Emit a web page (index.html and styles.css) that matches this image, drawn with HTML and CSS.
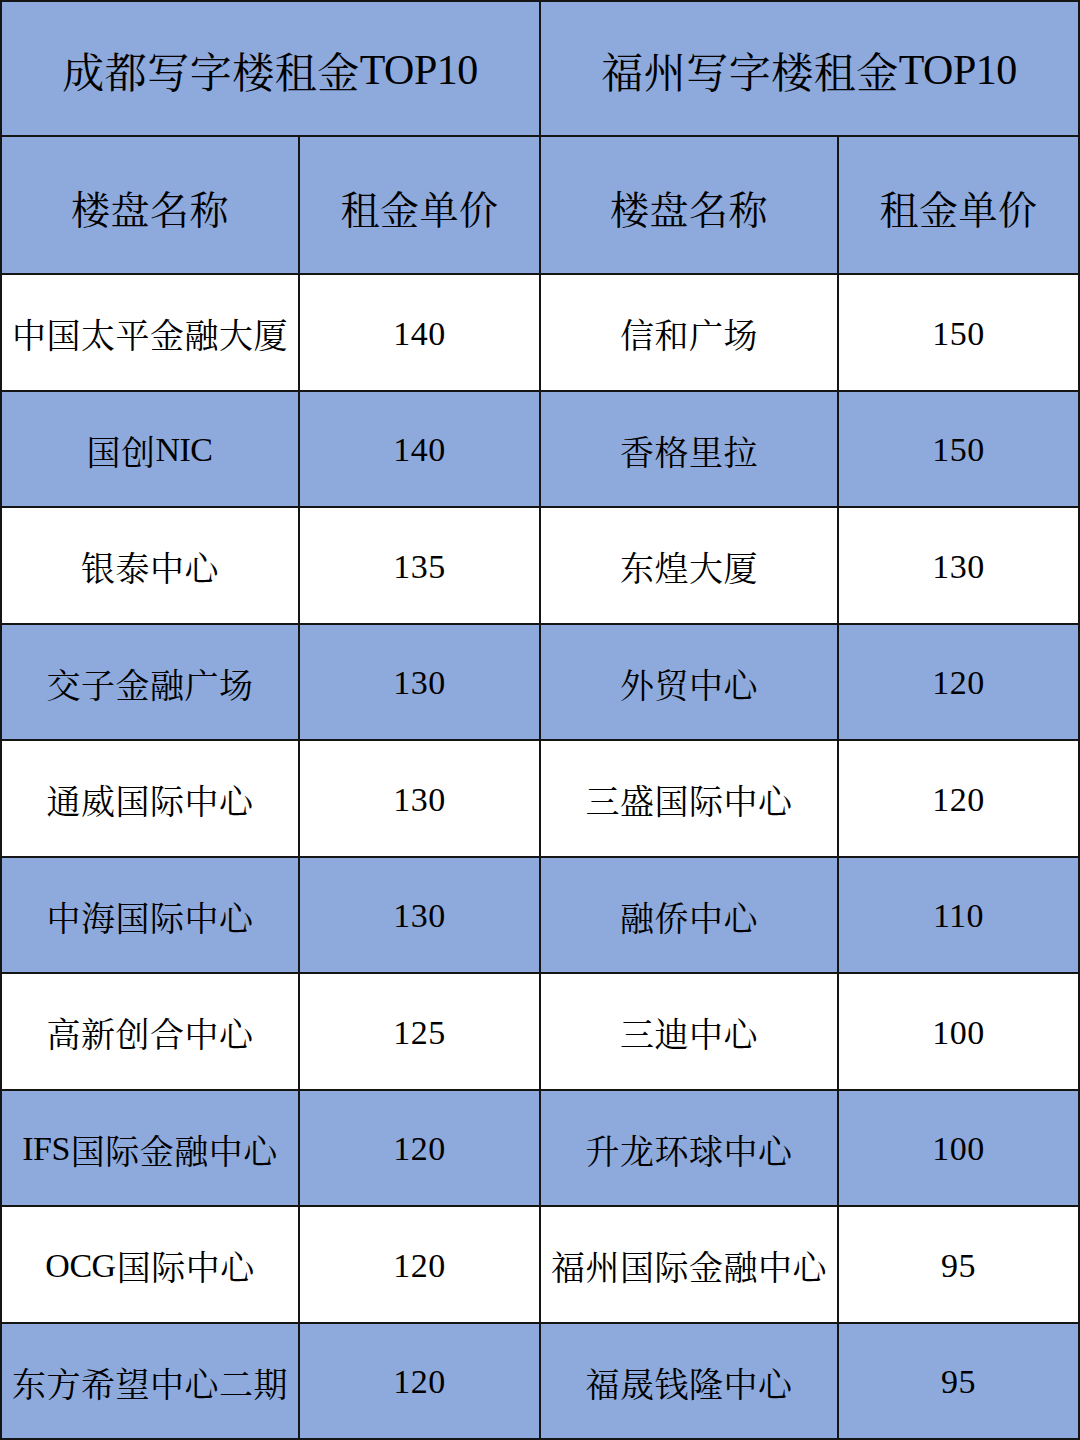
FILE: index.html
```html
<!DOCTYPE html>
<html lang="zh-CN">
<head>
<meta charset="utf-8">
<title>写字楼租金TOP10</title>
<link rel="stylesheet" href="styles.css">
</head>
<body>
<div class="table">
  <div class="cell title span2">成都写字楼租金<span class="lat">TOP10</span></div>
  <div class="cell title span2">福州写字楼租金<span class="lat">TOP10</span></div>
  <div class="cell sub">楼盘名称</div>
  <div class="cell sub">租金单价</div>
  <div class="cell sub">楼盘名称</div>
  <div class="cell sub">租金单价</div>

  <div class="cell w">中国太平金融大厦</div><div class="cell w">140</div><div class="cell w">信和广场</div><div class="cell w">150</div>
  <div class="cell b">国创<span class="lat">NIC</span></div><div class="cell b">140</div><div class="cell b">香格里拉</div><div class="cell b">150</div>
  <div class="cell w">银泰中心</div><div class="cell w">135</div><div class="cell w">东煌大厦</div><div class="cell w">130</div>
  <div class="cell b">交子金融广场</div><div class="cell b">130</div><div class="cell b">外贸中心</div><div class="cell b">120</div>
  <div class="cell w">通威国际中心</div><div class="cell w">130</div><div class="cell w">三盛国际中心</div><div class="cell w">120</div>
  <div class="cell b">中海国际中心</div><div class="cell b">130</div><div class="cell b">融侨中心</div><div class="cell b">110</div>
  <div class="cell w">高新创合中心</div><div class="cell w">125</div><div class="cell w">三迪中心</div><div class="cell w">100</div>
  <div class="cell b"><span class="lat">IFS</span>国际金融中心</div><div class="cell b">120</div><div class="cell b">升龙环球中心</div><div class="cell b">100</div>
  <div class="cell w"><span class="lat">OCG</span>国际中心</div><div class="cell w">120</div><div class="cell w">福州国际金融中心</div><div class="cell w">95</div>
  <div class="cell b">东方希望中心二期</div><div class="cell b">120</div><div class="cell b">福晟钱隆中心</div><div class="cell b">95</div>
</div>
</body>
</html>
```

FILE: styles.css
```css
html, body {
  margin: 0;
  padding: 0;
  background: #ffffff;
}

.table {
  width: 1080px;
  height: 1440px;
  box-sizing: border-box;
  display: grid;
  grid-template-columns: 296px 239px 296px 239px;
  grid-template-rows: 133px 136px repeat(10, 114.5px);
  gap: 2px;
  padding: 2px;
  background: #151515;
  font-family: "Liberation Serif", "Noto Serif CJK SC", "Noto Sans CJK SC", serif;
  color: #000000;
}

.cell {
  display: flex;
  align-items: center;
  justify-content: center;
  white-space: nowrap;
  font-size: 34px;
  letter-spacing: 0.5px;
  padding-top: 3px;
  box-sizing: border-box;
}

.lat {
  letter-spacing: -0.5px;
  margin-right: 1px;
}

.span2 {
  grid-column: span 2;
}

.title {
  background: #8eaadc;
  font-size: 42px;
}

.sub {
  background: #8eaadc;
  font-size: 39px;
}

.b {
  background: #8eaadc;
}

.w {
  background: #ffffff;
}
```
